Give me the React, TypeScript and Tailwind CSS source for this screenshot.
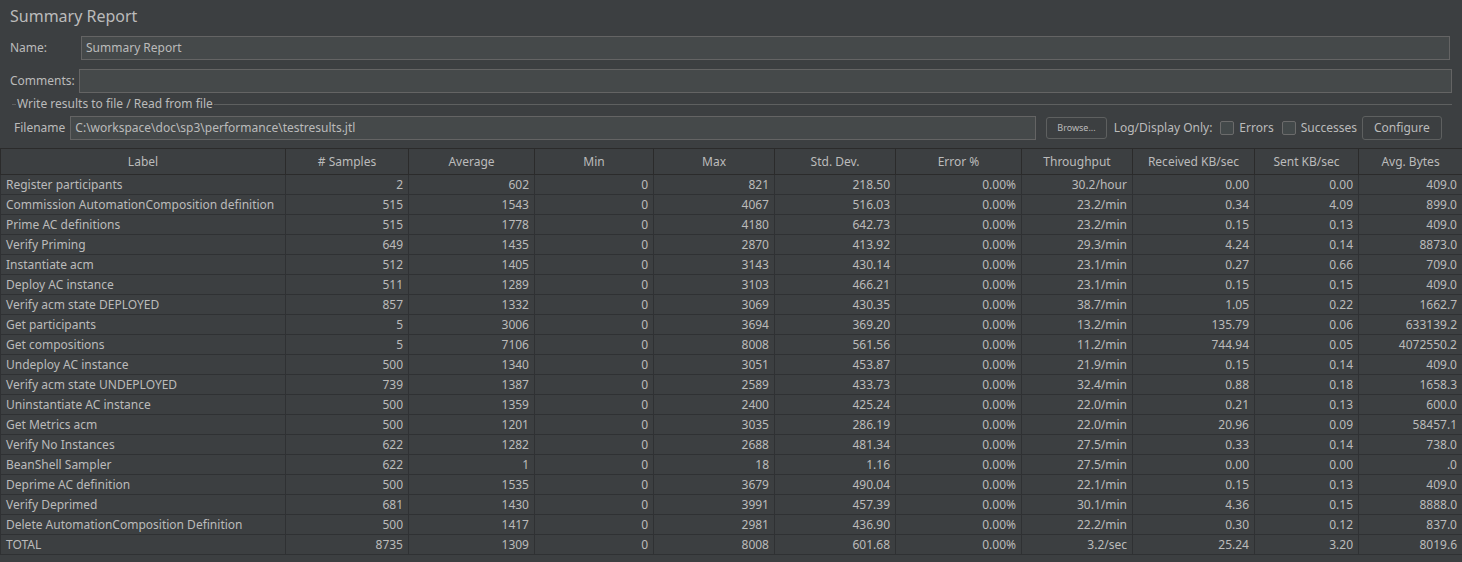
const rows = [
["Register participants","2","602","0","821","218.50","0.00%","30.2/hour","0.00","0.00","409.0"],
["Commission AutomationComposition definition","515","1543","0","4067","516.03","0.00%","23.2/min","0.34","4.09","899.0"],
["Prime AC definitions","515","1778","0","4180","642.73","0.00%","23.2/min","0.15","0.13","409.0"],
["Verify Priming","649","1435","0","2870","413.92","0.00%","29.3/min","4.24","0.14","8873.0"],
["Instantiate acm","512","1405","0","3143","430.14","0.00%","23.1/min","0.27","0.66","709.0"],
["Deploy AC instance","511","1289","0","3103","466.21","0.00%","23.1/min","0.15","0.15","409.0"],
["Verify acm state DEPLOYED","857","1332","0","3069","430.35","0.00%","38.7/min","1.05","0.22","1662.7"],
["Get participants","5","3006","0","3694","369.20","0.00%","13.2/min","135.79","0.06","633139.2"],
["Get compositions","5","7106","0","8008","561.56","0.00%","11.2/min","744.94","0.05","4072550.2"],
["Undeploy AC instance","500","1340","0","3051","453.87","0.00%","21.9/min","0.15","0.14","409.0"],
["Verify acm state UNDEPLOYED","739","1387","0","2589","433.73","0.00%","32.4/min","0.88","0.18","1658.3"],
["Uninstantiate AC instance","500","1359","0","2400","425.24","0.00%","22.0/min","0.21","0.13","600.0"],
["Get Metrics acm","500","1201","0","3035","286.19","0.00%","22.0/min","20.96","0.09","58457.1"],
["Verify No Instances","622","1282","0","2688","481.34","0.00%","27.5/min","0.33","0.14","738.0"],
["BeanShell Sampler","622","1","0","18","1.16","0.00%","27.5/min","0.00","0.00",".0"],
["Deprime AC definition","500","1535","0","3679","490.04","0.00%","22.1/min","0.15","0.13","409.0"],
["Verify Deprimed","681","1430","0","3991","457.39","0.00%","30.1/min","4.36","0.15","8888.0"],
["Delete AutomationComposition Definition","500","1417","0","2981","436.90","0.00%","22.2/min","0.30","0.12","837.0"],
["TOTAL","8735","1309","0","8008","601.68","0.00%","3.2/sec","25.24","3.20","8019.6"],
];
const heads = ["Label","# Samples","Average","Min","Max","Std. Dev.","Error %","Throughput","Received KB/sec","Sent KB/sec","Avg. Bytes"];
const widths = [285,123,126,119,121,121,126,111,122,104,104];

export default function App() {
  return (
    <div className="w-[1462px] h-[562px] overflow-hidden bg-[#3c3f41] text-[#bbbbbb] text-[12px] whitespace-nowrap" style={{fontFamily:'"Noto Sans","Open Sans",sans-serif'}}>
      <div className="px-[10px] pt-[4px] text-[16px] h-[28px] text-[#bbbbbb]">Summary Report</div>
      <div className="flex items-center h-[36px] pl-[10px] pr-[12px] pt-[4px]">
        <div className="w-[71px]">Name:</div>
        <div className="flex-1 h-[24px] border border-[#646464] bg-[#45494a] px-[4px] flex items-center">Summary Report</div>
      </div>
      <div className="flex items-center h-[31px] pl-[10px] pr-[10px] pt-[3px]">
        <div className="w-[69px]">Comments:</div>
        <div className="flex-1 h-[24px] border border-[#646464] bg-[#45494a]"></div>
      </div>
      <div className="flex items-center h-[18px] pl-[12px] pr-[10px]">
        <div className="w-[4px] h-px bg-[#5e6060]"></div>
        <span className="px-[1px]">Write results to file / Read from file</span>
        <div className="flex-1 h-px bg-[#5e6060]"></div>
      </div>
      <div className="flex items-center h-[30px] pl-[14px] pr-[16px] gap-[5px]">
        <span>Filename</span>
        <div className="w-[966px] shrink-0 h-[24px] border border-[#646464] bg-[#45494a] px-[4px] flex items-center">C:\workspace\doc\sp3\performance\testresults.jtl</div>
        <div className="ml-[5px] h-[22px] px-[10px] border border-[#5e6060] rounded-[3px] bg-[#3c3f41] text-[9px] flex items-center shrink-0">Browse...</div>
        <span className="ml-[2px] shrink-0">Log/Display Only:</span>
        <div className="ml-[3px] w-[14px] h-[14px] border border-[#6b6b6b] rounded-[2px] bg-[#43494a] shrink-0"></div>
        <span>Errors</span>
        <div className="ml-[3px] w-[14px] h-[14px] border border-[#6b6b6b] rounded-[2px] bg-[#43494a] shrink-0"></div>
        <span>Successes</span>
        <div className="h-[24px] px-[11px] border border-[#5e6060] rounded-[3px] flex items-center shrink-0">Configure</div>
      </div>
      <div className="mt-[5px]">
        <table className="table-fixed border-collapse w-[1462px]">
          <colgroup>{widths.map((w,i)=><col key={i} style={{width:w}}/>)}</colgroup>
          <thead>
            <tr className="h-[26px]">
              {heads.map(h=><th key={h} className="font-normal border border-[#2b2b2b] text-center bg-[#3c3f41]">{h}</th>)}
            </tr>
          </thead>
          <tbody>
            {rows.map((r,i)=>(
              <tr key={i} className="h-[20px]">
                {r.map((c,j)=><td key={j} className={`border border-[#2f3133] px-[5px] whitespace-nowrap leading-[19px] ${j===0?"text-left":"text-right"}`}>{c}</td>)}
              </tr>
            ))}
          </tbody>
        </table>
      </div>
    </div>
  );
}
